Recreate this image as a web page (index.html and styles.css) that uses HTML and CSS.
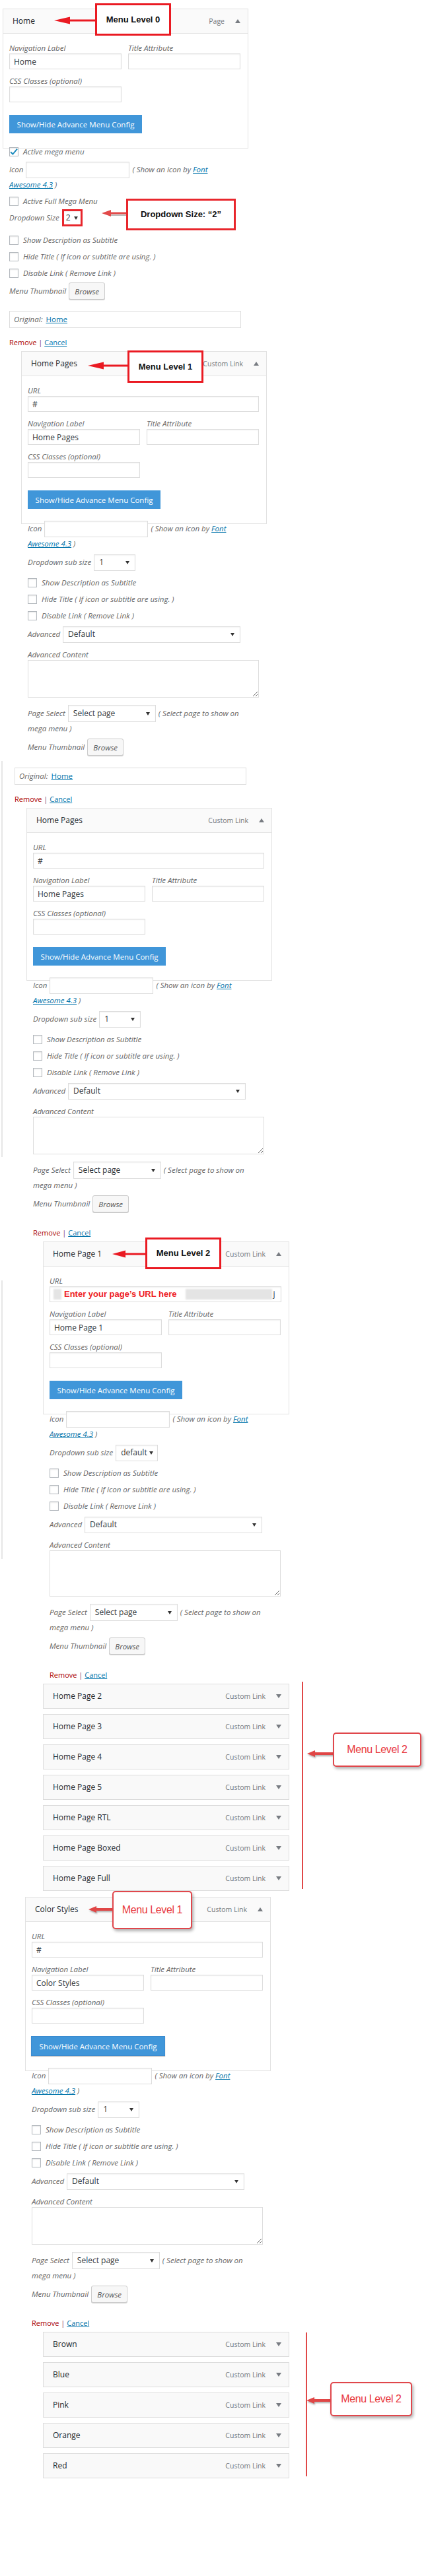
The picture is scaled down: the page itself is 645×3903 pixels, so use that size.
FILE: index.html
```html
<!DOCTYPE html>
<html lang="en">
<head>
<meta charset="utf-8">
<title>Menu structure</title>
<link rel="stylesheet" href="styles.css">
</head>
<body>
<div class="page">

  <div class="edge edge-a"></div>
  <div class="edge edge-b"></div>

  <!-- Menu level 0 -->
  <section class="item item-0">
    <div class="box">
      <div class="box-head"><span class="box-title">Home</span><span class="box-type">Page</span><span class="tri tri-up"></span></div>
      <div class="box-body">
        <div class="cols">
          <div class="field"><span class="lbl">Navigation Label</span><input class="inp" type="text" value="Home"></div>
          <div class="field"><span class="lbl">Title Attribute</span><input class="inp" type="text" value=""></div>
        </div>
        <div class="field field-half"><span class="lbl">CSS Classes (optional)</span><input class="inp" type="text" value=""></div>
        <button class="btn-adv" type="button">Show/Hide Advance Menu Config</button>
      </div>
    </div>
    <div class="extras extras-0">
      <div class="cb-row"><span class="cb"><svg viewBox="0 0 14 14" width="14" height="14"><path d="M2.2 7.2 L5.4 10.6 L12 2.6" fill="none" stroke="#1e8cbe" stroke-width="2"/></svg></span><span class="cb-text">Active mega menu</span></div>
      <div class="ctrl-row icon-row"><span class="lbl-i">Icon</span><input class="inp inp-icon" type="text" value=""><span class="note">( Show an icon by <a href="#">Font</a></span></div>
      <div class="note-line"><a href="#">Awesome 4.3</a> )</div>
      <div class="cb-row"><span class="cb"></span><span class="cb-text">Active Full Mega Menu</span></div>
      <div class="ctrl-row dd-row"><span class="lbl-i">Dropdown Size</span><span class="sel sel-size">2<i class="caret"></i></span></div>
      <div class="cb-group">
        <div class="cb-row"><span class="cb"></span><span class="cb-text">Show Description as Subtitle</span></div>
        <div class="cb-row"><span class="cb"></span><span class="cb-text">Hide Title ( If icon or subtitle are using. )</span></div>
        <div class="cb-row"><span class="cb"></span><span class="cb-text">Disable Link ( Remove Link )</span></div>
      </div>
      <div class="ctrl-row thumb-row"><span class="lbl-i">Menu Thumbnail</span><button class="browse" type="button">Browse</button></div>
      <div class="orig"><span class="orig-lbl">Original:</span><a href="#">Home</a></div>
      <div class="actions"><a class="remove" href="#">Remove</a> <span class="sep">|</span> <a href="#">Cancel</a></div>
    </div>
    <svg class="arr arr-a1" viewBox="0 0 62 12" width="62" height="12"><polygon points="0,6 24,0.5 24,11.5" fill="#ea1a22"/><rect x="22" y="4.5" width="40" height="3" fill="#ea1a22"/></svg>
    <div class="ann ann-a1">Menu Level 0</div>
    <svg class="arr arr-a2" viewBox="0 0 40 14" width="40" height="14"><polygon points="1,6 15,1 15,11" fill="#e24a4a"/><rect x="13" y="4.5" width="27" height="3" fill="#e24a4a"/><rect x="15" y="8" width="25" height="2" fill="#bbb"/></svg>
    <div class="ann ann-a2">Dropdown Size: “2”</div>
  </section>

  <!-- Menu level 1 : Home Pages -->
  <section class="item item-1">
    <div class="box">
      <div class="box-head"><span class="box-title">Home Pages</span><span class="box-type">Custom Link</span><span class="tri tri-up"></span></div>
      <div class="box-body">
        <div class="field"><span class="lbl">URL</span><input class="inp" type="text" value="#"></div>
        <div class="cols">
          <div class="field"><span class="lbl">Navigation Label</span><input class="inp" type="text" value="Home Pages"></div>
          <div class="field"><span class="lbl">Title Attribute</span><input class="inp" type="text" value=""></div>
        </div>
        <div class="field field-half"><span class="lbl">CSS Classes (optional)</span><input class="inp" type="text" value=""></div>
        <button class="btn-adv" type="button">Show/Hide Advance Menu Config</button>
      </div>
    </div>
    <div class="extras extras-1">
      <div class="ctrl-row icon-row"><span class="lbl-i">Icon</span><input class="inp inp-icon" type="text" value=""><span class="note">( Show an icon by <a href="#">Font</a></span></div>
      <div class="note-line"><a href="#">Awesome 4.3</a> )</div>
      <div class="ctrl-row dd-row"><span class="lbl-i">Dropdown sub size</span><span class="sel sel-sub">1<i class="caret"></i></span></div>
      <div class="cb-group">
        <div class="cb-row"><span class="cb"></span><span class="cb-text">Show Description as Subtitle</span></div>
        <div class="cb-row"><span class="cb"></span><span class="cb-text">Hide Title ( If icon or subtitle are using. )</span></div>
        <div class="cb-row"><span class="cb"></span><span class="cb-text">Disable Link ( Remove Link )</span></div>
      </div>
      <div class="ctrl-row adv-row"><span class="lbl-i">Advanced</span><span class="sel sel-adv">Default<i class="caret"></i></span></div>
      <span class="lbl adv-label">Advanced Content</span>
      <textarea class="adv-ta"></textarea>
      <div class="ctrl-row page-row"><span class="lbl-i">Page Select</span><span class="sel sel-page">Select page<i class="caret"></i></span><span class="note">( Select page to show on</span></div>
      <div class="note-line">mega menu )</div>
      <div class="ctrl-row thumb-row"><span class="lbl-i">Menu Thumbnail</span><button class="browse" type="button">Browse</button></div>
      <div class="tail">
        <div class="orig"><span class="orig-lbl">Original:</span><a href="#">Home</a></div>
        <div class="actions"><a class="remove" href="#">Remove</a> <span class="sep">|</span> <a href="#">Cancel</a></div>
      </div>
    </div>
    <svg class="arr arr-a3" viewBox="0 0 60 12" width="60" height="12"><polygon points="0,6 24,0.5 24,11.5" fill="#ea1a22"/><rect x="22" y="4.5" width="38" height="3" fill="#ea1a22"/></svg>
    <div class="ann ann-a3">Menu Level 1</div>
  </section>

  <!-- Home Pages (second view) -->
  <section class="item item-2">
    <div class="box">
      <div class="box-head"><span class="box-title">Home Pages</span><span class="box-type">Custom Link</span><span class="tri tri-up"></span></div>
      <div class="box-body">
        <div class="field"><span class="lbl">URL</span><input class="inp" type="text" value="#"></div>
        <div class="cols">
          <div class="field"><span class="lbl">Navigation Label</span><input class="inp" type="text" value="Home Pages"></div>
          <div class="field"><span class="lbl">Title Attribute</span><input class="inp" type="text" value=""></div>
        </div>
        <div class="field field-half"><span class="lbl">CSS Classes (optional)</span><input class="inp" type="text" value=""></div>
        <button class="btn-adv" type="button">Show/Hide Advance Menu Config</button>
      </div>
    </div>
    <div class="extras">
      <div class="ctrl-row icon-row"><span class="lbl-i">Icon</span><input class="inp inp-icon" type="text" value=""><span class="note">( Show an icon by <a href="#">Font</a></span></div>
      <div class="note-line"><a href="#">Awesome 4.3</a> )</div>
      <div class="ctrl-row dd-row"><span class="lbl-i">Dropdown sub size</span><span class="sel sel-sub">1<i class="caret"></i></span></div>
      <div class="cb-group">
        <div class="cb-row"><span class="cb"></span><span class="cb-text">Show Description as Subtitle</span></div>
        <div class="cb-row"><span class="cb"></span><span class="cb-text">Hide Title ( If icon or subtitle are using. )</span></div>
        <div class="cb-row"><span class="cb"></span><span class="cb-text">Disable Link ( Remove Link )</span></div>
      </div>
      <div class="ctrl-row adv-row"><span class="lbl-i">Advanced</span><span class="sel sel-adv">Default<i class="caret"></i></span></div>
      <span class="lbl adv-label">Advanced Content</span>
      <textarea class="adv-ta"></textarea>
      <div class="ctrl-row page-row"><span class="lbl-i">Page Select</span><span class="sel sel-page">Select page<i class="caret"></i></span><span class="note">( Select page to show on</span></div>
      <div class="note-line">mega menu )</div>
      <div class="ctrl-row thumb-row"><span class="lbl-i">Menu Thumbnail</span><button class="browse" type="button">Browse</button></div>
      <div class="actions"><a class="remove" href="#">Remove</a> <span class="sep">|</span> <a href="#">Cancel</a></div>
    </div>
  </section>

  <!-- Menu level 2 : Home Page 1 -->
  <section class="item item-3">
    <div class="box">
      <div class="box-head"><span class="box-title">Home Page 1</span><span class="box-type">Custom Link</span><span class="tri tri-up"></span></div>
      <div class="box-body">
        <div class="field"><span class="lbl">URL</span>
          <div class="inp inp-url"><span class="blur blur-a"></span><span class="url-note">Enter your page’s URL here</span><span class="blur blur-b"></span><span class="url-j">j</span></div>
        </div>
        <div class="cols">
          <div class="field"><span class="lbl">Navigation Label</span><input class="inp" type="text" value="Home Page 1"></div>
          <div class="field"><span class="lbl">Title Attribute</span><input class="inp" type="text" value=""></div>
        </div>
        <div class="field field-half"><span class="lbl">CSS Classes (optional)</span><input class="inp" type="text" value=""></div>
        <button class="btn-adv" type="button">Show/Hide Advance Menu Config</button>
      </div>
    </div>
    <div class="extras">
      <div class="ctrl-row icon-row"><span class="lbl-i">Icon</span><input class="inp inp-icon" type="text" value=""><span class="note">( Show an icon by <a href="#">Font</a></span></div>
      <div class="note-line"><a href="#">Awesome 4.3</a> )</div>
      <div class="ctrl-row dd-row"><span class="lbl-i">Dropdown sub size</span><span class="sel sel-sub sel-default">default<i class="caret"></i></span></div>
      <div class="cb-group">
        <div class="cb-row"><span class="cb"></span><span class="cb-text">Show Description as Subtitle</span></div>
        <div class="cb-row"><span class="cb"></span><span class="cb-text">Hide Title ( If icon or subtitle are using. )</span></div>
        <div class="cb-row"><span class="cb"></span><span class="cb-text">Disable Link ( Remove Link )</span></div>
      </div>
      <div class="ctrl-row adv-row"><span class="lbl-i">Advanced</span><span class="sel sel-adv">Default<i class="caret"></i></span></div>
      <span class="lbl adv-label">Advanced Content</span>
      <textarea class="adv-ta ta-tall"></textarea>
      <div class="ctrl-row page-row"><span class="lbl-i">Page Select</span><span class="sel sel-page">Select page<i class="caret"></i></span><span class="note">( Select page to show on</span></div>
      <div class="note-line">mega menu )</div>
      <div class="ctrl-row thumb-row"><span class="lbl-i">Menu Thumbnail</span><button class="browse" type="button">Browse</button></div>
      <div class="actions"><a class="remove" href="#">Remove</a> <span class="sep">|</span> <a href="#">Cancel</a></div>
    </div>
    <svg class="arr arr-a4" viewBox="0 0 50 12" width="50" height="12"><polygon points="0,6 20,0.5 20,11.5" fill="#ea1a22"/><rect x="18" y="4.5" width="32" height="3" fill="#ea1a22"/></svg>
    <div class="ann ann-a4">Menu Level 2</div>
  </section>

  <!-- collapsed level 2 items -->
  <section class="group group-a">
    <div class="c-item"><span class="box-title">Home Page 2</span><span class="box-type">Custom Link</span><span class="tri tri-down"></span></div>
    <div class="c-item"><span class="box-title">Home Page 3</span><span class="box-type">Custom Link</span><span class="tri tri-down"></span></div>
    <div class="c-item"><span class="box-title">Home Page 4</span><span class="box-type">Custom Link</span><span class="tri tri-down"></span></div>
    <div class="c-item"><span class="box-title">Home Page 5</span><span class="box-type">Custom Link</span><span class="tri tri-down"></span></div>
    <div class="c-item"><span class="box-title">Home Page RTL</span><span class="box-type">Custom Link</span><span class="tri tri-down"></span></div>
    <div class="c-item"><span class="box-title">Home Page Boxed</span><span class="box-type">Custom Link</span><span class="tri tri-down"></span></div>
    <div class="c-item"><span class="box-title">Home Page Full</span><span class="box-type">Custom Link</span><span class="tri tri-down"></span></div>
    <div class="vline vline-a"></div>
    <svg class="arr arr-a6" viewBox="0 0 40 12" width="40" height="12"><polygon points="0,6 12,1 12,11" fill="#e04646"/><rect x="10" y="4" width="30" height="4" fill="#e04646"/></svg>
    <div class="ann2 ann-a6">Menu Level 2</div>
  </section>

  <!-- Menu level 1 : Color Styles -->
  <section class="item item-4">
    <div class="box">
      <div class="box-head"><span class="box-title">Color Styles</span><span class="box-type">Custom Link</span><span class="tri tri-up"></span></div>
      <div class="box-body">
        <div class="field"><span class="lbl">URL</span><input class="inp" type="text" value="#"></div>
        <div class="cols">
          <div class="field"><span class="lbl">Navigation Label</span><input class="inp" type="text" value="Color Styles"></div>
          <div class="field"><span class="lbl">Title Attribute</span><input class="inp" type="text" value=""></div>
        </div>
        <div class="field field-half"><span class="lbl">CSS Classes (optional)</span><input class="inp" type="text" value=""></div>
        <button class="btn-adv btn-adv-alt" type="button">Show/Hide Advance Menu Config</button>
      </div>
    </div>
    <div class="extras">
      <div class="ctrl-row icon-row"><span class="lbl-i">Icon</span><input class="inp inp-icon" type="text" value=""><span class="note">( Show an icon by <a href="#">Font</a></span></div>
      <div class="note-line"><a href="#">Awesome 4.3</a> )</div>
      <div class="ctrl-row dd-row"><span class="lbl-i">Dropdown sub size</span><span class="sel sel-sub">1<i class="caret"></i></span></div>
      <div class="cb-group">
        <div class="cb-row"><span class="cb"></span><span class="cb-text">Show Description as Subtitle</span></div>
        <div class="cb-row"><span class="cb"></span><span class="cb-text">Hide Title ( If icon or subtitle are using. )</span></div>
        <div class="cb-row"><span class="cb"></span><span class="cb-text">Disable Link ( Remove Link )</span></div>
      </div>
      <div class="ctrl-row adv-row"><span class="lbl-i">Advanced</span><span class="sel sel-adv">Default<i class="caret"></i></span></div>
      <span class="lbl adv-label">Advanced Content</span>
      <textarea class="adv-ta"></textarea>
      <div class="ctrl-row page-row"><span class="lbl-i">Page Select</span><span class="sel sel-page">Select page<i class="caret"></i></span><span class="note">( Select page to show on</span></div>
      <div class="note-line">mega menu )</div>
      <div class="ctrl-row thumb-row"><span class="lbl-i">Menu Thumbnail</span><button class="browse" type="button">Browse</button></div>
      <div class="actions"><a class="remove" href="#">Remove</a> <span class="sep">|</span> <a href="#">Cancel</a></div>
    </div>
    <svg class="arr arr-a7" viewBox="0 0 36 12" width="36" height="12"><polygon points="0,6 12,1 12,11" fill="#e04646"/><rect x="10" y="4" width="26" height="4" fill="#e04646"/></svg>
    <div class="ann2 ann-a7">Menu Level 1</div>
  </section>

  <!-- collapsed colour items -->
  <section class="group group-b">
    <div class="c-item"><span class="box-title">Brown</span><span class="box-type">Custom Link</span><span class="tri tri-down"></span></div>
    <div class="c-item"><span class="box-title">Blue</span><span class="box-type">Custom Link</span><span class="tri tri-down"></span></div>
    <div class="c-item"><span class="box-title">Pink</span><span class="box-type">Custom Link</span><span class="tri tri-down"></span></div>
    <div class="c-item"><span class="box-title">Orange</span><span class="box-type">Custom Link</span><span class="tri tri-down"></span></div>
    <div class="c-item"><span class="box-title">Red</span><span class="box-type">Custom Link</span><span class="tri tri-down"></span></div>
    <div class="vline vline-b"></div>
    <svg class="arr arr-a8" viewBox="0 0 36 12" width="36" height="12"><polygon points="0,6 12,1 12,11" fill="#e04646"/><rect x="10" y="4" width="26" height="4" fill="#e04646"/></svg>
    <div class="ann2 ann-a8">Menu Level 2</div>
  </section>

</div>
</body>
</html>
```

FILE: styles.css
```css
* { box-sizing: border-box; }
html, body { margin: 0; padding: 0; background: #fff; }
body {
  font-family: "Open Sans", "Noto Sans", "DejaVu Sans", sans-serif;
  font-size: 11.5px;
  line-height: 16px;
  color: #666;
}
a { color: #0073aa; text-decoration: underline; }

.page { position: relative; width: 645px; height: 3903px; overflow: hidden; padding-top: 13px; }

/* faint left edge of the stitched admin screenshot */
.edge { position: absolute; left: 2px; width: 2px; background: #e6e6e6; }
.edge-a { top: 1153px; height: 600px; }
.edge-b { top: 1940px; height: 422px; }

/* item placement */
.item, .group { position: relative; width: 372px; }
.item-0 { margin-left: 4px; }
.item-1 { margin-left: 32px; margin-top: 5px; }
.item-2 { margin-left: 40px; margin-top: 5px; }
.item-3 { margin-left: 65px; margin-top: 5px; width: 373px; }
.group-a { margin-left: 65px; margin-top: 5px; width: 373px; }
.item-4 { margin-left: 38px; margin-top: 9px; }
.group-b { margin-left: 65px; margin-top: 5px; width: 373px; }

/* expanded box */
.box { border: 1px solid #e2e2e2; background: #fff; }
.box-head {
  display: flex; align-items: center; height: 37px;
  padding: 0 11px 0 14px; background: #fafafa; border-bottom: 1px solid #e2e2e2;
}
.box-title { flex: 1; font-size: 12px; color: #23282d; white-space: nowrap; }
.box-type { font-size: 10.5px; color: #72777c; white-space: nowrap; }
.tri { width: 0; height: 0; margin-left: 16px; border-left: 4px solid transparent; border-right: 4px solid transparent; }
.tri-up { border-bottom: 6px solid #787c82; }
.tri-down { border-top: 6px solid #787c82; }

.box-body { padding: 14px 11px 22px 9px; }
.box-body > * + * { margin-top: 10px; }
.cols { display: flex; gap: 10px; }
.cols .field { width: 170px; }
.field-half { width: 170px; }
.lbl { display: block; height: 16px; line-height: 16px; font-style: italic; color: #666; white-space: nowrap; }
.inp {
  display: block; width: 100%; height: 24px; margin: 0; padding: 0 6px;
  border: 1px solid #ddd; background: #fff; outline: none;
  box-shadow: inset 0 1px 2px rgba(0,0,0,.06);
  font-family: inherit; font-size: 12px; color: #32373c;
}
.box-body > .btn-adv { margin-top: 19px; }
.btn-adv {
  display: block; width: 201px; height: 28px; padding: 0;
  border: 0; background: #4096d9; color: #fff;
  font-family: inherit; font-size: 11.5px; text-align: center;
}
.btn-adv-alt { height: 30px; width: 203px; margin-left: -1px; border: 1px solid #3a8bd0; box-shadow: 0 1px 1px rgba(0,0,0,.25); }

/* URL with annotation */
.inp-url { display: flex; align-items: center; padding: 0 5px; }
.blur { display: block; background: #e4e4e4; filter: blur(1px); height: 16px; flex: none; }
.blur-a { width: 12px; }
.url-note { margin-left: 4px; font-family: "Liberation Sans", Arial, sans-serif; font-weight: bold; font-size: 13px; color: #ee1c24; white-space: nowrap; }
.blur-b { width: 131px; margin-left: 13px; }
.url-j { margin-left: 2px; font-size: 12px; color: #333; }

/* extras below the box */
.extras { position: relative; margin-top: -6px; padding-left: 10px; }
.extras-0 { margin-top: -8px; }
.ctrl-row { display: flex; align-items: center; gap: 4px; height: 26px; white-space: nowrap; }
.lbl-i, .note, .cb-text, .note-line, .orig-lbl { font-style: italic; color: #666; white-space: nowrap; }
.note-line { line-height: 24px; height: 24px; margin-top: -2px; }
.inp-icon { width: 157px; height: 25px; flex: none; }

.sel {
  display: flex; align-items: center; justify-content: space-between; flex: none;
  height: 25px; padding: 0 8px 0 7px; border: 1px solid #ddd; background: #fff;
  font-size: 12px; color: #32373c; font-style: normal;
  box-shadow: inset 0 1px 2px rgba(0,0,0,.05);
}
.caret { display: block; width: 0; height: 0; border-left: 3px solid transparent; border-right: 3px solid transparent; border-top: 5px solid #333; }
.sel-sub { width: 63px; }
.sel-default { width: 64px; padding-right: 6px; }
.sel-adv { width: 269px; }
.sel-page { width: 133px; height: 26px; }
.sel-size { width: 31px; height: 26px; padding: 0 4px 0 3px; border: 3px solid #e8262c; }

.cb-row { display: flex; align-items: center; gap: 7px; height: 25px; }
.cb { position: relative; flex: none; width: 14px; height: 14px; border: 1px solid #b4b9be; background: #fff; box-shadow: inset 0 1px 2px rgba(0,0,0,.1); }
.cb svg { position: absolute; left: -1px; top: -1px; }

.adv-label { margin-top: 10px; }
.adv-ta { display: block; width: 350px; height: 57px; margin: 0; padding: 2px; border: 1px solid #ddd; background: #fff; resize: both; font-family: inherit; }
.ta-tall { height: 70px; }
.browse {
  flex: none; width: 55px; height: 26px; padding: 0;
  border: 1px solid #ccc; border-radius: 3px; background: #f7f7f7; box-shadow: 0 1px 0 #ccc;
  font-family: inherit; font-style: italic; font-size: 11.5px; color: #555;
}
.orig { display: flex; align-items: center; gap: 5px; width: 351px; height: 26px; padding-left: 6px; border: 1px solid #ddd; }
.orig a { font-size: 11.5px; }
.actions { height: 16px; line-height: 16px; font-size: 11px; white-space: nowrap; }
.remove { color: #a00; text-decoration: none; }
.sep { color: #7b3b73; }

/* vertical rhythm of the extras */
.extras .dd-row { margin-top: 3px; }
.extras .cb-group { margin-top: 5px; }
.extras .adv-row { margin-top: 3px; }
.extras .page-row { margin-top: 11px; }
.extras .thumb-row { margin-top: 3px; }
.extras .actions { margin-top: 23px; }
.extras-0 .icon-row { margin-top: 2px; }
.extras-0 .dd-row { margin-top: 0; }
.extras-0 .cb-group { margin-top: 8px; }
.extras-0 .thumb-row { margin-top: 2px; }
.extras .orig { margin-top: 17px; }
.extras-1 .orig { margin-top: 18px; }
.extras-0 .actions, .extras-1 .actions { margin-top: 14px; }
.extras-1 .tail { margin-left: -20px; }

/* collapsed items */
.c-item {
  display: flex; align-items: center; height: 38px; margin-bottom: 8px;
  padding: 0 11px 0 14px; background: #f9f9f9; border: 1px solid #dcdcdc;
}
.c-item:last-of-type { margin-bottom: 0; }

/* annotations (overlays) */
.ann {
  position: absolute; display: flex; align-items: center; justify-content: center;
  background: #fff; border: 3px solid #ea1a22;
  font-family: "Liberation Sans", Arial, sans-serif; font-weight: bold; font-size: 13px; color: #111;
  white-space: nowrap;
}
.ann-a1 { left: 140px; top: -8px; width: 115px; height: 49px; }
.ann-a2 { left: 187px; top: 288px; width: 166px; height: 48px; border-color: #e8262c; }
.ann-a3 { left: 161px; top: -1px; width: 115px; height: 49px; }
.ann-a4 { left: 155px; top: -6px; width: 115px; height: 48px; }
.arr { position: absolute; display: block; }
.arr-a1 { left: 78px; top: 12px; }
.arr-a2 { left: 149px; top: 304px; }
.arr-a3 { left: 101px; top: 16px; }
.arr-a4 { left: 105px; top: 13px; }

.ann2 {
  position: absolute; display: flex; align-items: center; justify-content: center;
  background: #fff; border: 2px solid #e0474c; border-radius: 5px;
  box-shadow: 2px 3px 4px rgba(0,0,0,.3);
  font-family: "Liberation Sans", Arial, sans-serif; font-size: 16px; letter-spacing: -0.4px; color: #e8383d;
  white-space: nowrap;
}
.ann-a6 { left: 439px; top: 74px; width: 134px; height: 52px; }
.ann-a7 { left: 132px; top: -9px; width: 121px; height: 58px; }
.ann-a8 { left: 435px; top: 76px; width: 124px; height: 52px; }
.arr-a6 { left: 400px; top: 100px; filter: drop-shadow(1px 2px 1px rgba(0,0,0,.3)); }
.arr-a7 { left: 96px; top: 13px; filter: drop-shadow(1px 2px 1px rgba(0,0,0,.3)); }
.arr-a8 { left: 399px; top: 98px; filter: drop-shadow(1px 2px 1px rgba(0,0,0,.3)); }
.vline { position: absolute; width: 2px; background: #e04848; }
.vline-a { left: 392px; top: -3px; height: 314px; }
.vline-b { left: 398px; top: 1px; height: 218px; }
```
